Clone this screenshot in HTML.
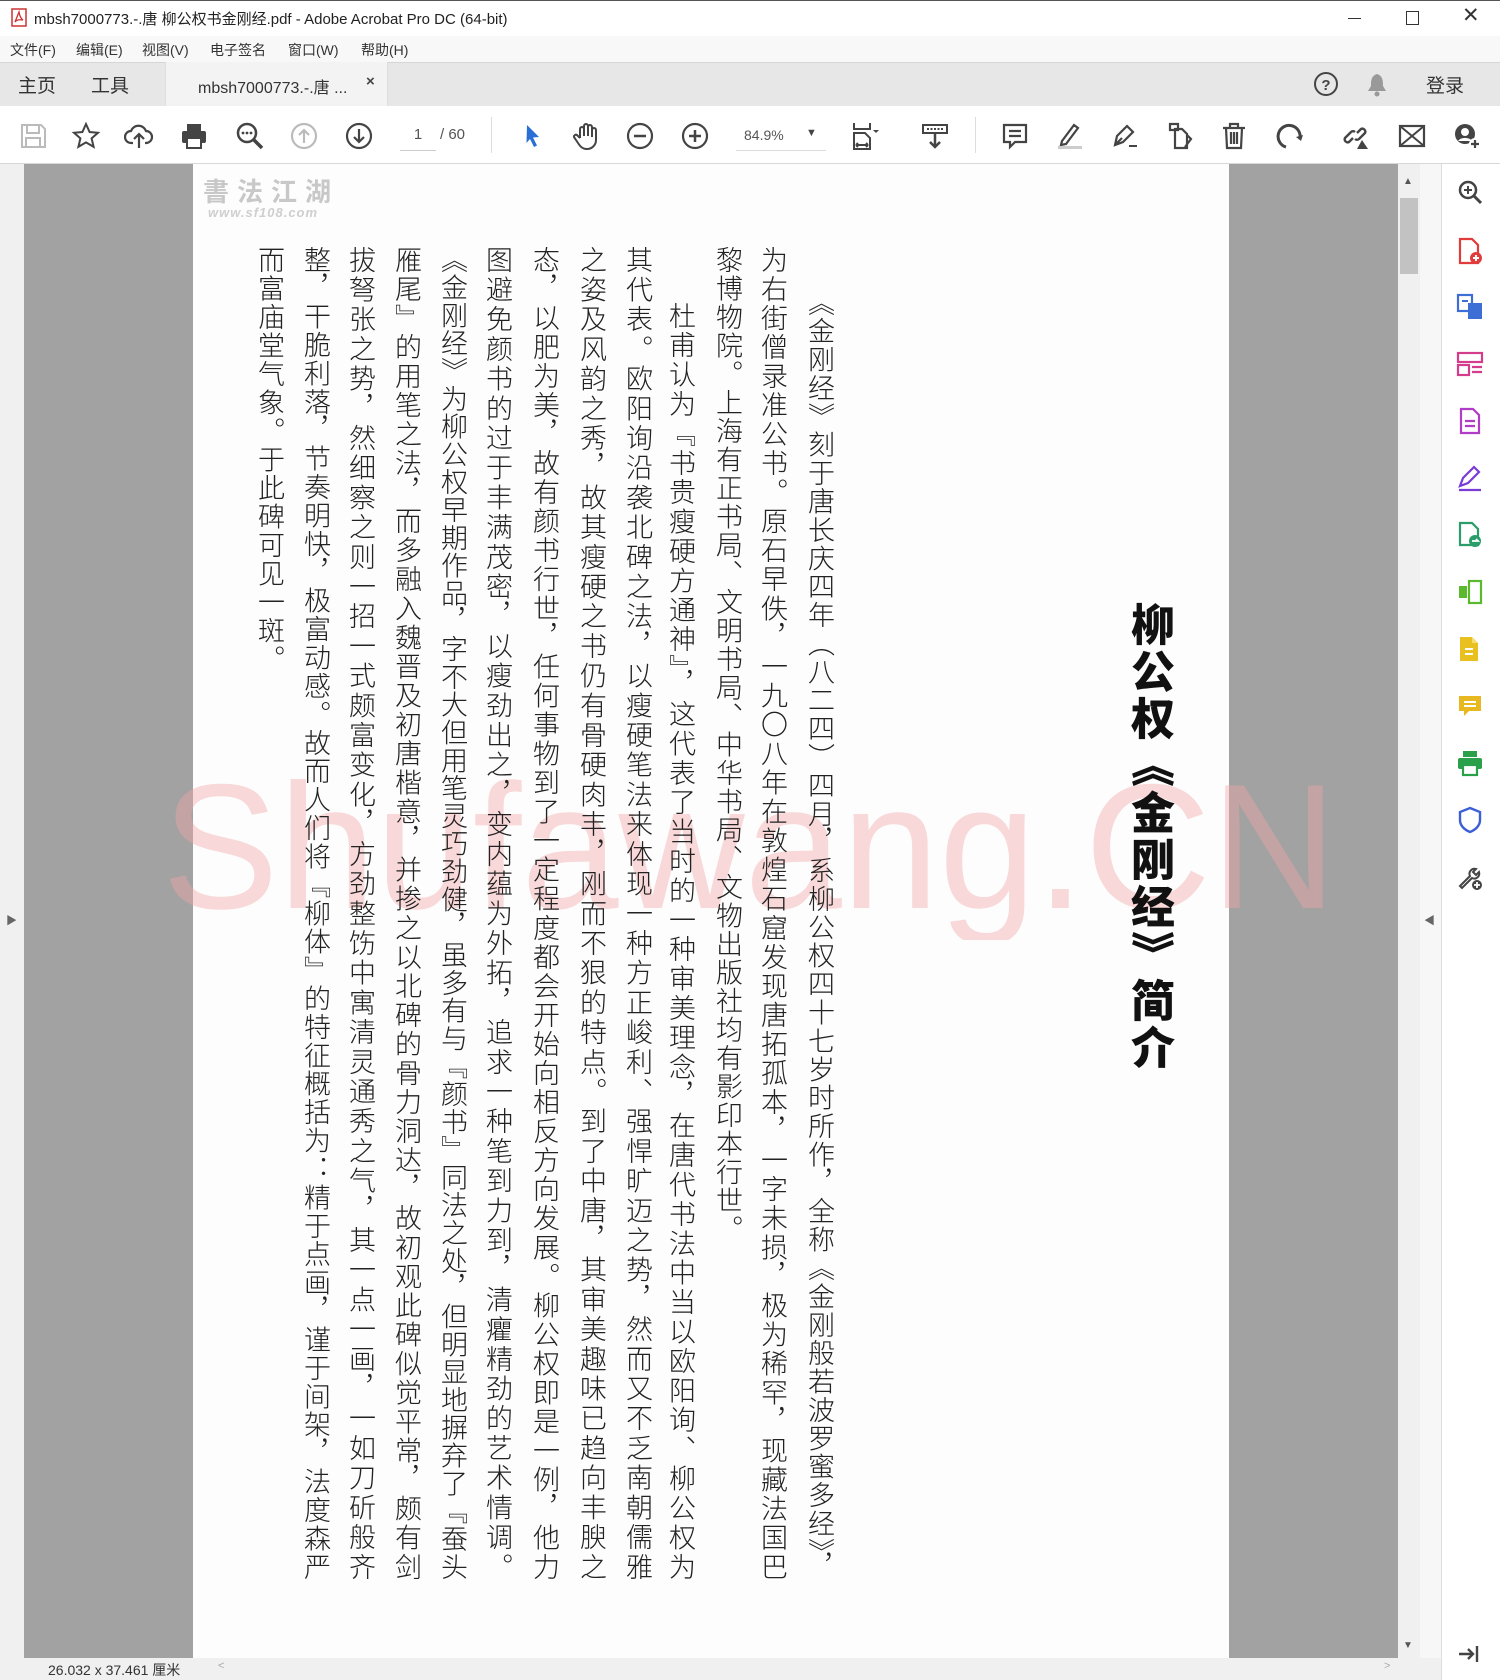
<!DOCTYPE html>
<html><head><meta charset="utf-8">
<style>
*{margin:0;padding:0;box-sizing:border-box}
body{width:1500px;height:1680px;overflow:hidden;background:#fff;font-family:"Liberation Sans","Noto Sans CJK SC",sans-serif;position:relative;color:#222}
.a{position:absolute}
.ic{position:absolute;top:121px;width:30px;height:30px}
.col{position:absolute;writing-mode:vertical-rl;font-family:"Noto Sans CJK SC",sans-serif;font-size:27px;font-weight:300;line-height:32px;width:32px;height:1334px;color:#222;text-align:justify;text-align-last:justify}
.col.s{text-align-last:auto;text-align:start;letter-spacing:1.5px}
.ri{position:absolute;left:1456px;width:28px;height:28px}
</style></head><body>
<!-- title bar -->
<div class="a" style="left:0;top:0;width:1500px;height:36px;background:#fff;border-top:1px solid #555"></div>
<svg class="a" style="left:11px;top:8px" width="16" height="19"><rect x="1" y="1" width="14" height="17" fill="#fff" stroke="#c33" stroke-width="1.5"/><path d="M4 14 Q8 4 8 4 Q9 10 12 12 Q6 11 4 14Z" fill="none" stroke="#c33" stroke-width="1.3"/></svg>
<div class="a" style="left:34px;top:8px;font-size:15px;color:#222">mbsh7000773.-.唐 柳公权书金刚经.pdf - Adobe Acrobat Pro DC (64-bit)</div>
<div class="a" style="left:1348px;top:18px;width:13px;height:1px;background:#333"></div>
<div class="a" style="left:1406px;top:11px;width:13px;height:14px;border:1.3px solid #333"></div>
<div class="a" style="left:1462px;top:3px;font-size:21px;color:#333;font-weight:300">✕</div>
<!-- menu -->
<div class="a" style="left:0;top:36px;width:1500px;height:26px;background:#f8f8f8"></div>
<div class="a" style="left:10px;top:40px;font-size:14px;color:#333">文件(F)</div>
<div class="a" style="left:76px;top:40px;font-size:14px;color:#333">编辑(E)</div>
<div class="a" style="left:142px;top:40px;font-size:14px;color:#333">视图(V)</div>
<div class="a" style="left:210px;top:40px;font-size:14px;color:#333">电子签名</div>
<div class="a" style="left:288px;top:40px;font-size:14px;color:#333">窗口(W)</div>
<div class="a" style="left:361px;top:40px;font-size:14px;color:#333">帮助(H)</div>
<!-- tab bar -->
<div class="a" style="left:0;top:62px;width:1500px;height:44px;background:#e7e7e7;border-top:1px solid #d6d6d6"></div>
<div class="a" style="left:18px;top:71px;font-size:19px;color:#333">主页</div>
<div class="a" style="left:91px;top:71px;font-size:19px;color:#333">工具</div>
<div class="a" style="left:165px;top:62px;width:223px;height:45px;background:#f3f3f3;border-left:1px solid #ddd;border-right:1px solid #ddd"></div>
<div class="a" style="left:198px;top:74px;font-size:16px;color:#333">mbsh7000773.-.唐 ...</div>
<div class="a" style="left:366px;top:73px;font-size:15px;color:#444;font-weight:bold">×</div>
<svg class="a" style="left:1313px;top:71px" width="26" height="26"><circle cx="13" cy="13" r="11" fill="none" stroke="#444" stroke-width="2"/><text x="13" y="19" text-anchor="middle" font-size="15" font-weight="bold" fill="#444" font-family="Liberation Sans">?</text></svg>
<svg class="a" style="left:1365px;top:72px" width="24" height="26"><path d="M12 2 C6 4 6 9 6 14 L3 19 L21 19 L18 14 C18 9 18 4 12 2Z" fill="#999"/><circle cx="12" cy="22" r="2.5" fill="#999"/></svg>
<div class="a" style="left:1426px;top:71px;font-size:19px;color:#333">登录</div>
<!-- toolbar -->
<div class="a" style="left:0;top:106px;width:1500px;height:58px;background:#fff;border-bottom:1px solid #d8d8d8"></div>
<svg class="ic" style="left:18px" viewBox="0 0 30 30"><path d="M4 4h19l4 4v18H4z M9 4v8h12V4 M8 26v-9h14v9" fill="none" stroke="#bbb" stroke-width="2"/></svg>
<svg class="ic" style="left:71px" viewBox="0 0 30 30"><path d="M15 3l3.6 8 8.4.8-6.4 5.6 2 8.4L15 21.4 7.4 25.8l2-8.4L3 11.8l8.4-.8z" fill="none" stroke="#444" stroke-width="2"/></svg>
<svg class="ic" style="left:124px" viewBox="0 0 30 30"><path d="M9 22H7a6 6 0 010-12 8 8 0 0115 0 6 6 0 010 12h-1 M15 27V13 M10 18l5-5 5 5" fill="none" stroke="#444" stroke-width="2.2"/></svg>
<svg class="ic" style="left:179px" viewBox="0 0 30 30"><rect x="8" y="3" width="14" height="7" fill="#444"/><rect x="3" y="10" width="24" height="12" rx="2" fill="#444"/><rect x="8" y="17" width="14" height="10" fill="#fff" stroke="#444" stroke-width="2"/></svg>
<svg class="ic" style="left:235px" viewBox="0 0 30 30"><circle cx="12" cy="12" r="9" fill="none" stroke="#444" stroke-width="2.5"/><path d="M19 19l8 8" stroke="#444" stroke-width="3.5"/><circle cx="8" cy="12" r="1.4" fill="#444"/><circle cx="12" cy="12" r="1.4" fill="#444"/><circle cx="16" cy="12" r="1.4" fill="#444"/></svg>
<svg class="ic" style="left:289px" viewBox="0 0 30 30"><circle cx="15" cy="15" r="12" fill="none" stroke="#bbb" stroke-width="2.2"/><path d="M15 22V9 M10 14l5-5 5 5" fill="none" stroke="#bbb" stroke-width="2.2"/></svg>
<svg class="ic" style="left:344px" viewBox="0 0 30 30"><circle cx="15" cy="15" r="12" fill="none" stroke="#444" stroke-width="2.2"/><path d="M15 8v13 M10 16l5 5 5-5" fill="none" stroke="#444" stroke-width="2.2"/></svg>
<div class="a" style="left:400px;top:126px;width:36px;text-align:center;font-size:15px;color:#555">1</div>
<div class="a" style="left:400px;top:150px;width:36px;height:1px;background:#ccc"></div>
<div class="a" style="left:440px;top:126px;font-size:15px;color:#555">/ 60</div>
<div class="a" style="left:491px;top:117px;width:1px;height:36px;background:#ddd"></div>
<svg class="ic" style="left:518px" viewBox="0 0 30 30"><path d="M9 4l12 12-6 .5 4 8-3 1.5-4-8-3.5 4z" fill="#2a6fd6"/></svg>
<svg class="ic" style="left:571px" viewBox="0 0 30 30"><path d="M9 17V8a2 2 0 014 0v7V5a2 2 0 014 0v10V6a2 2 0 014 0v10V9a2 2 0 014 0v10c0 5-4 9-9 9s-7-3-9-6l-4-6a2 2 0 013-2l3 3" fill="none" stroke="#444" stroke-width="2"/></svg>
<svg class="ic" style="left:625px" viewBox="0 0 30 30"><circle cx="15" cy="15" r="12" fill="none" stroke="#444" stroke-width="2.2"/><path d="M9 15h12" stroke="#444" stroke-width="2.5"/></svg>
<svg class="ic" style="left:680px" viewBox="0 0 30 30"><circle cx="15" cy="15" r="12" fill="none" stroke="#444" stroke-width="2.2"/><path d="M9 15h12M15 9v12" stroke="#444" stroke-width="2.5"/></svg>
<div class="a" style="left:744px;top:127px;font-size:14px;color:#555">84.9%</div>
<div class="a" style="left:736px;top:150px;width:90px;height:1px;background:#ddd"></div>
<div class="a" style="left:806px;top:127px;font-size:11px;color:#444">▼</div>
<svg class="ic" style="left:850px" viewBox="0 0 30 30"><path d="M4 2v6h16V2 M4 28V12h11l5 5v11z M6 24h12 M6 24l2-2 M6 24l2 2 M18 24l-2-2 M18 24l-2 2" fill="none" stroke="#444" stroke-width="2"/><path d="M23 9l3 3 3-3z" fill="#444"/></svg>
<svg class="ic" style="left:920px" viewBox="0 0 30 30"><rect x="3" y="4" width="24" height="8" fill="none" stroke="#444" stroke-width="2"/><path d="M7 8h16" stroke="#444" stroke-width="2" stroke-dasharray="2 1.5"/><path d="M15 13v13 M10 21l5 5 5-5" fill="none" stroke="#444" stroke-width="2.5"/></svg>
<div class="a" style="left:975px;top:117px;width:1px;height:36px;background:#ddd"></div>
<svg class="ic" style="left:1000px" viewBox="0 0 30 30"><path d="M4 4h22v17H15l-5 5v-5H4z M9 10h12 M9 15h12" fill="none" stroke="#444" stroke-width="2.2"/></svg>
<svg class="ic" style="left:1054px" viewBox="0 0 30 30"><path d="M8 20l12-16 4 3-12 16-5 1z" fill="none" stroke="#444" stroke-width="2.2"/><rect x="4" y="25" width="24" height="3" fill="#ccc"/></svg>
<svg class="ic" style="left:1109px" viewBox="0 0 30 30"><path d="M6 24l2-9 10-10 6 6-10 10z M6 24l7-7" fill="none" stroke="#444" stroke-width="2.2"/><path d="M20 25h8" stroke="#444" stroke-width="2"/></svg>
<svg class="ic" style="left:1165px" viewBox="0 0 30 30"><path d="M5 3h8v6H5z M10 8h7l5 5v14H10z M22 14l4 4-6 8" fill="none" stroke="#444" stroke-width="2.2"/></svg>
<svg class="ic" style="left:1219px" viewBox="0 0 30 30"><path d="M4 7h22 M11 7V3h8v4 M7 7l1 20h14l1-20 M12 11v12 M15 11v12 M18 11v12" fill="none" stroke="#444" stroke-width="2.2"/></svg>
<svg class="ic" style="left:1274px" viewBox="0 0 30 30"><path d="M12 26A11 11 0 1126 17" fill="none" stroke="#444" stroke-width="3"/><path d="M22 16l5 4 2-6z" fill="#444"/></svg>
<svg class="ic" style="left:1341px" viewBox="0 0 30 30"><path d="M12 17l-4 4a3 3 0 01-4-4l6-6a3 3 0 014 0 M16 12l4-4a3 3 0 014 4l-6 6a3 3 0 01-4 0" fill="none" stroke="#444" stroke-width="2.4"/><path d="M16 28l5-9 6 9z" fill="#444"/></svg>
<svg class="ic" style="left:1397px" viewBox="0 0 30 30"><rect x="3" y="5" width="24" height="20" fill="none" stroke="#444" stroke-width="2.2"/><path d="M3 5l24 20M27 5L3 25" stroke="#444" stroke-width="2"/></svg>
<svg class="ic" style="left:1452px" viewBox="0 0 30 30"><circle cx="13" cy="13" r="10" fill="#444"/><circle cx="13" cy="11" r="4" fill="#fff"/><path d="M6 20a8 6 0 0114 0" fill="#fff"/><circle cx="23" cy="23" r="6" fill="#fff"/><path d="M23 19v8M19 23h8" stroke="#444" stroke-width="2.2"/></svg>
<!-- doc area -->
<div class="a" style="left:0;top:164px;width:24px;height:1494px;background:#f0f0f0"></div>
<div class="a" style="left:6px;top:912px;font-size:11px;color:#666">▶</div>
<div class="a" style="left:24px;top:164px;width:1374px;height:1494px;background:#a2a2a2"></div>
<div class="a" style="left:193px;top:164px;width:1036px;height:1494px;background:#fdfdfd"></div>
<!-- watermark -->
<svg class="a" style="left:150px;top:760px" width="1200" height="180"><text x="12" y="148" textLength="1175" lengthAdjust="spacingAndGlyphs" font-family="Liberation Sans" font-size="178" fill="#f0a5a5" fill-opacity="0.42">Shufawang.CN</text></svg>
<!-- logo -->
<div class="a" style="left:203px;top:172px;font-size:26px;color:#c8c8c8;font-weight:bold;letter-spacing:8px;font-family:'Noto Sans CJK SC',sans-serif">書法江湖</div>
<div class="a" style="left:208px;top:205px;font-size:13px;color:#cfcfcf;font-style:italic;font-weight:bold;letter-spacing:1px">www.sf108.com</div>
<!-- title -->
<div class="a" lang="zh-CN" style="left:1128px;top:602px;writing-mode:vertical-rl;font-family:'Noto Sans CJK SC',sans-serif;font-size:44px;font-weight:900;letter-spacing:3px;color:#111;line-height:50px;white-space:nowrap">柳公权《金刚经》简介</div>
<!-- columns -->
<div class="col" lang="zh-CN" style="left:805px;top:289px;height:1291px">《金刚经》刻于唐长庆四年（八二四）四月，系柳公权四十七岁时所作，全称《金刚般若波罗蜜多经》，</div>
<div class="col" lang="zh-CN" style="left:758px;top:246px">为右街僧录准公书。原石早佚，一九〇八年在敦煌石窟发现唐拓孤本，一字未损，极为稀罕，现藏法国巴</div>
<div class="col s" lang="zh-CN" style="left:713px;top:246px">黎博物院。上海有正书局、文明书局、中华书局、文物出版社均有影印本行世。</div>
<div class="col" lang="zh-CN" style="left:666px;top:302px;height:1278px">杜甫认为『书贵瘦硬方通神』，这代表了当时的一种审美理念，在唐代书法中当以欧阳询、柳公权为</div>
<div class="col" lang="zh-CN" style="left:623px;top:246px">其代表。欧阳询沿袭北碑之法，以瘦硬笔法来体现一种方正峻利、强悍旷迈之势，然而又不乏南朝儒雅</div>
<div class="col" lang="zh-CN" style="left:577px;top:246px">之姿及风韵之秀，故其瘦硬之书仍有骨硬肉丰，刚而不狠的特点。到了中唐，其审美趣味已趋向丰腴之</div>
<div class="col" lang="zh-CN" style="left:530px;top:246px">态，以肥为美，故有颜书行世，任何事物到了一定程度都会开始向相反方向发展。柳公权即是一例，他力</div>
<div class="col" lang="zh-CN" style="left:483px;top:246px">图避免颜书的过于丰满茂密，以瘦劲出之，变内蕴为外拓，追求一种笔到力到，清癯精劲的艺术情调。</div>
<div class="col" lang="zh-CN" style="left:438px;top:246px">《金刚经》为柳公权早期作品，字不大但用笔灵巧劲健，虽多有与『颜书』同法之处，但明显地摒弃了『蚕头</div>
<div class="col" lang="zh-CN" style="left:392px;top:246px">雁尾』的用笔之法，而多融入魏晋及初唐楷意，并掺之以北碑的骨力洞达，故初观此碑似觉平常，颇有剑</div>
<div class="col" lang="zh-CN" style="left:346px;top:246px">拔弩张之势，然细察之则一招一式颇富变化，方劲整饬中寓清灵通秀之气，其一点一画，一如刀斫般齐</div>
<div class="col" lang="zh-CN" style="left:301px;top:246px">整，干脆利落，节奏明快，极富动感。故而人们将『柳体』的特征概括为：精于点画，谨于间架，法度森严</div>
<div class="col s" lang="zh-CN" style="left:255px;top:246px">而富庙堂气象。于此碑可见一斑。</div>
<!-- scrollbar -->
<div class="a" style="left:1398px;top:164px;width:22px;height:1494px;background:#f0f0f0"></div>
<div class="a" style="left:1403px;top:176px;font-size:10px;color:#555">▲</div>
<div class="a" style="left:1400px;top:198px;width:18px;height:76px;background:#c2c2c2"></div>
<div class="a" style="left:1403px;top:1640px;font-size:10px;color:#555">▼</div>
<div class="a" style="left:1420px;top:164px;width:21px;height:1494px;background:#f7f7f7"></div>
<div class="a" style="left:1424px;top:912px;font-size:11px;color:#666">◀</div>
<!-- right panel -->
<div class="a" style="left:1441px;top:164px;width:59px;height:1516px;background:#fff;border-left:1px solid #ddd"></div>
<svg class="ri" style="top:178px" viewBox="0 0 28 28"><circle cx="12" cy="12" r="8" fill="none" stroke="#444" stroke-width="2.5"/><path d="M18 18l7 7" stroke="#444" stroke-width="3"/><path d="M8 12h8M12 8v8" stroke="#444" stroke-width="2"/></svg>
<svg class="ri" style="top:237px" viewBox="0 0 28 28"><path d="M4 2h12l6 6v18H4z" fill="none" stroke="#e03c3c" stroke-width="2.2"/><circle cx="20" cy="21" r="6" fill="#e03c3c"/><path d="M20 18v6M17 21h6" stroke="#fff" stroke-width="2"/></svg>
<svg class="ri" style="top:293px" viewBox="0 0 28 28"><rect x="2" y="2" width="14" height="16" fill="none" stroke="#3c6ed6" stroke-width="2.2"/><rect x="12" y="10" width="14" height="16" fill="#3c6ed6"/><path d="M6 8h6" stroke="#3c6ed6" stroke-width="2"/></svg>
<svg class="ri" style="top:350px" viewBox="0 0 28 28"><rect x="2" y="3" width="24" height="9" fill="none" stroke="#d43c8c" stroke-width="2.2"/><rect x="2" y="15" width="11" height="10" fill="none" stroke="#d43c8c" stroke-width="2.2"/><path d="M16 17h10M16 22h10" stroke="#d43c8c" stroke-width="2.2"/></svg>
<svg class="ri" style="top:407px" viewBox="0 0 28 28"><path d="M5 2h12l6 6v18H5z" fill="none" stroke="#b03cc8" stroke-width="2.2"/><path d="M9 14h10M9 19h10" stroke="#b03cc8" stroke-width="2.2"/></svg>
<svg class="ri" style="top:464px" viewBox="0 0 28 28"><path d="M4 22l3-8 11-11 5 5-11 11z" fill="none" stroke="#7a3cd6" stroke-width="2.2"/><path d="M3 26h22" stroke="#7a3cd6" stroke-width="2.2"/></svg>
<svg class="ri" style="top:521px" viewBox="0 0 28 28"><path d="M4 2h12l6 6v16H4z" fill="none" stroke="#2a9d6a" stroke-width="2.2"/><circle cx="19" cy="20" r="6" fill="#2a9d6a"/><path d="M16 20h6l-2-2" stroke="#fff" stroke-width="1.8" fill="none"/></svg>
<svg class="ri" style="top:578px" viewBox="0 0 28 28"><rect x="13" y="3" width="12" height="22" fill="none" stroke="#5cb82c" stroke-width="2.2"/><rect x="3" y="8" width="8" height="12" fill="#5cb82c"/></svg>
<svg class="ri" style="top:635px" viewBox="0 0 28 28"><path d="M4 2h12l6 6v18H4z" fill="#e8c020"/><path d="M16 2v6h6" fill="#f5dd70"/><path d="M9 14h8M9 19h8" stroke="#fff" stroke-width="2"/></svg>
<svg class="ri" style="top:692px" viewBox="0 0 28 28"><path d="M3 4h22v15H13l-5 5v-5H3z" fill="#e8b820"/><path d="M8 10h12M8 14h12" stroke="#fff" stroke-width="2"/></svg>
<svg class="ri" style="top:749px" viewBox="0 0 28 28"><rect x="7" y="2" width="14" height="6" fill="#2aa04a"/><rect x="2" y="9" width="24" height="11" rx="2" fill="#2aa04a"/><rect x="7" y="16" width="14" height="10" fill="#fff" stroke="#2aa04a" stroke-width="2.2"/></svg>
<svg class="ri" style="top:806px" viewBox="0 0 28 28"><path d="M14 2l10 4v8c0 6-5 10-10 12C9 24 4 20 4 14V6z" fill="none" stroke="#3c5ed6" stroke-width="2.4"/></svg>
<svg class="ri" style="top:864px" viewBox="0 0 28 28"><path d="M4 22l10-10a5 5 0 016-7l-3 3 3 3 3-3a5 5 0 01-7 6L6 24z" fill="none" stroke="#444" stroke-width="2"/><circle cx="21" cy="21" r="5" fill="#444"/><path d="M21 18v6M18 21h6" stroke="#fff" stroke-width="1.8"/></svg>
<svg class="ri" style="top:1640px" viewBox="0 0 28 28"><path d="M3 14h14M12 9l5 5-5 5M21 6v16" fill="none" stroke="#444" stroke-width="2.4"/></svg>
<!-- status bar -->
<div class="a" style="left:0;top:1658px;width:1441px;height:22px;background:#f0f0f0"></div>
<div class="a" style="left:48px;top:1660px;font-size:14px;color:#333">26.032 x 37.461 厘米</div>
<div class="a" style="left:218px;top:1660px;font-size:11px;color:#aaa">&lt;</div>
<div class="a" style="left:1384px;top:1660px;font-size:11px;color:#aaa">&gt;</div>
</body></html>
